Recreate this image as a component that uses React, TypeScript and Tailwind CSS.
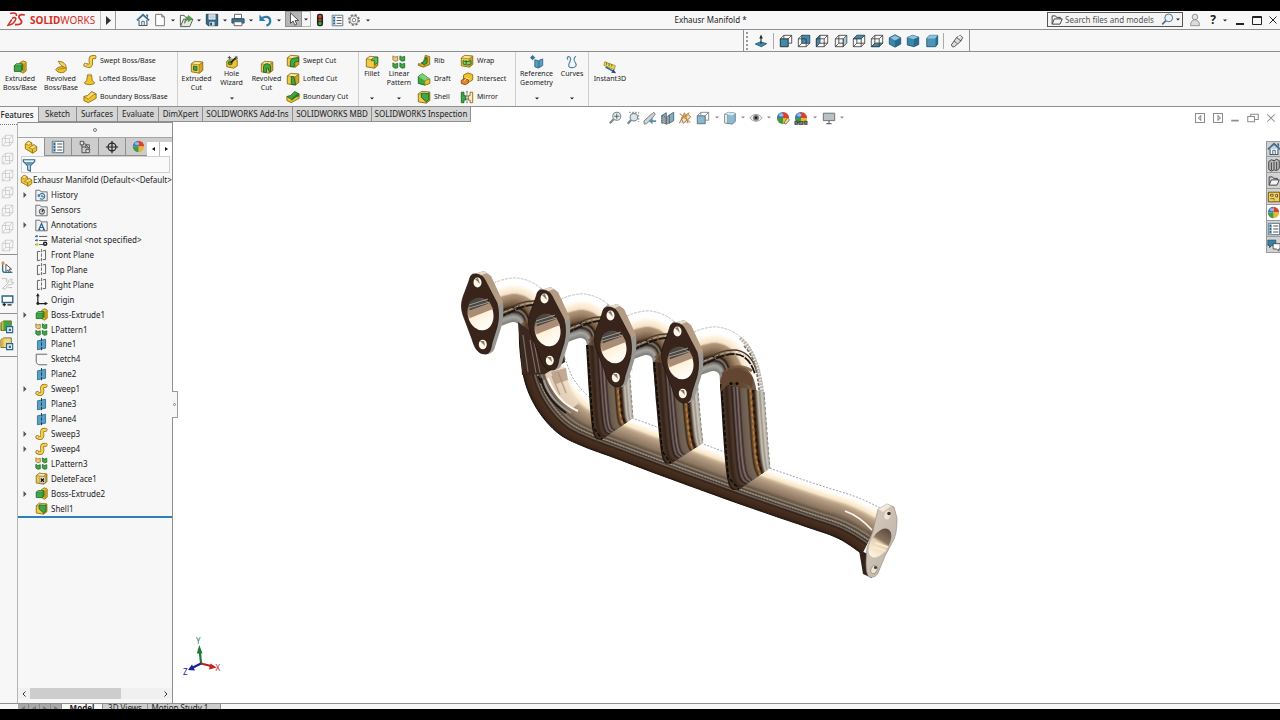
import React from "react";

type P = [number, number];
type Kids = { children?: React.ReactNode };

/* ---------- icon base ---------- */

function Ico({ children, s = 14 }: Kids & { s?: number }) {
  return (
    <svg width={s} height={s} viewBox="0 0 16 16" className="shrink-0" aria-hidden="true">
      {children}
    </svg>
  );
}

function Caret({ color = "#222" }: { color?: string }) {
  return (
    <svg width="4" height="3" viewBox="0 0 4 3" className="shrink-0" aria-hidden="true">
      <path d="M0 .4h4L2 2.6z" fill={color} />
    </svg>
  );
}

/* ---------- title bar icons ---------- */

const HomeIcon = () => (
  <Ico s={14}>
    <path d="M3.5 8v6.3h9V8" fill="#f4f8fb" stroke="#3c5870" strokeWidth="1.2" />
    <path d="M1 8.4 8 2l7 6.4" fill="none" stroke="#3f6d90" strokeWidth="2" />
    <path d="M6.6 9.5h2.8v4.8H6.6z" fill="#fff" stroke="#3c5870" />
    <path d="M11.5 2.5h1.6V5" fill="none" stroke="#3f6d90" strokeWidth="1.4" />
  </Ico>
);
const NewIcon = () => (
  <Ico s={14}>
    <path d="M3 1.5h7l3 3v10H3z" fill="#fdfdfd" stroke="#666" />
    <path d="M10 1.5v3h3" fill="none" stroke="#666" />
  </Ico>
);
const OpenIcon = () => (
  <Ico s={15}>
    <path d="M1.5 13.5v-11h4l1.5 2h3" fill="#fafafa" stroke="#555" />
    <path d="m1.5 14.5 3.4-8h10l-3.4 8z" fill="#e5e8e3" stroke="#555" />
    <path d="M6 11c0-4 1.5-5.8 4-6V2.6L14 6l-4 3.2V7C8.400 7.200 7 8.500 6 11z" fill="#4fa83f" stroke="#2c7423" strokeWidth=".6" />
  </Ico>
);
const SaveIcon = () => (
  <Ico s={14}>
    <path d="M1.500 1.500h13v13h-11l-2-2z" fill="#356785" stroke="#1d4259" />
    <path d="M4 1.500h8v6H4z" fill="#eef3f6" />
    <path d="M5 3.500h6M5 5.500h6" stroke="#8aa0ae" strokeWidth=".8" />
    <path d="M5 10h6v4.500H5z" fill="#cfd8dd" />
    <path d="M6 11h2v3H6z" fill="#1d4259" />
  </Ico>
);
const PrintIcon = () => (
  <Ico s={14}>
    <path d="M4 1.500h8v5H4z" fill="#fff" stroke="#555" />
    <path d="M1 6.500h14v5H1z" fill="#3d7190" stroke="#234e68" />
    <path d="M3.500 10h9v4.500h-9z" fill="#fff" stroke="#555" />
  </Ico>
);
const UndoIcon = () => (
  <Ico s={15}>
    <path d="M4 5.500c5-3 9-1 9 3 0 2.600-1.600 4.200-4 5" fill="none" stroke="#2e7ba5" strokeWidth="2.400" />
    <path d="M1.500 1.500v7h6.500z" fill="#2e7ba5" />
  </Ico>
);
const CursorIcon = () => (
  <Ico s={14}>
    <path d="M4 1v12l3-2.600L9 15l2.200-1-2-4.300h4z" fill="#fff" stroke="#444" />
  </Ico>
);
const TrafficIcon = () => (
  <Ico s={14}>
    <rect x="4.500" y=".8" width="7" height="14.400" rx="2.500" fill="#2a2422" />
    <circle cx="8" cy="4" r="2" fill="#e03a2c" />
    <circle cx="8" cy="8" r="1.800" fill="#7a6a1e" />
    <circle cx="8" cy="12" r="2" fill="#36a13a" />
  </Ico>
);
const ListIcon = ({ s = 14 }: { s?: number }) => (
  <Ico s={s}>
    <path d="M1.500 1.500h13v13h-13z" fill="#fff" stroke="#3f6376" />
    <path d="M2 2h3.500v12H2z" fill="#9cc0d4" />
    <path d="M3 4.500h1.800M3 8h1.800M3 11.500h1.800" stroke="#1d4259" strokeWidth="1.600" />
    <path d="M7 4.500h6M7 8h6M7 11.500h6" stroke="#555" strokeWidth="1.200" />
  </Ico>
);
const GearIcon = () => (
  <Ico s={14}>
    <circle cx="8" cy="8" r="5.800" fill="none" stroke="#777" strokeWidth="2" strokeDasharray="2.500 2.050" />
    <circle cx="8" cy="8" r="4.600" fill="#f4f4f4" stroke="#777" />
    <circle cx="8" cy="8" r="2" fill="#fff" stroke="#777" />
  </Ico>
);
const FolderIcon = () => (
  <Ico s={12}>
    <path d="M1.500 13.500v-11h4.500l1.500 2h5v2" fill="none" stroke="#444" strokeWidth="1.300" />
    <path d="m1.500 13.500 3-7h10.500l-3 7z" fill="#f4f4f4" stroke="#444" strokeWidth="1.300" />
  </Ico>
);
const MagnifierIcon = () => (
  <Ico s={13}>
    <circle cx="9.500" cy="6" r="4.800" fill="#e6f1f8" stroke="#53748c" strokeWidth="1.200" />
    <path d="M6 9.500 1.500 14" stroke="#53748c" strokeWidth="2.200" />
  </Ico>
);
const UserIcon = () => (
  <Ico s={14}>
    <circle cx="8" cy="4.500" r="3.200" fill="#e6e6e6" stroke="#8a8a8a" />
    <path d="M3 14.500c-1-9 11-9 10 0z" fill="#dcdcdc" stroke="#8a8a8a" />
  </Ico>
);

/* ---------- cube view icons ---------- */

type Face = "front" | "back" | "left" | "right" | "top" | "bottom";
const faces: Record<Face, string> = {
  front: "M1.500 5.500h9v9h-9z",
  back: "M5.500 1.500h9v9h-9z",
  left: "M1.500 5.500l4-4v9l-4 4z",
  right: "M10.500 5.500l4-4v9l-4 4z",
  top: "M1.500 5.500l4-4h9l-4 4z",
  bottom: "M1.500 14.500l4-4h9l-4 4z",
};
function CubeIcon({ face, color = "#333", fill = "#3f8bb0", s = 14 }: { face?: Face; color?: string; fill?: string; s?: number }) {
  const solid = face === "front";
  return (
    <Ico s={s}>
      <path
        d={solid ? "M5.500 5.500v-4h9v9h-4M10.500 5.500l4-4M1.500 5.500l4-4" : "M5.500 1.500h9v9h-9zM1.500 5.500l4-4M10.500 5.500l4-4M1.500 14.500l4-4M10.500 14.500l4-4"}
        fill="none"
        stroke={color}
        strokeWidth=".9"
      />
      {face && <path d={faces[face]} fill={fill} stroke={color} strokeWidth=".5" />}
      <path d="M1.500 5.500h9v9h-9z" fill="none" stroke={color} strokeWidth=".9" />
    </Ico>
  );
}
const IsoIcon = () => (
  <Ico>
    <path d="M8 1 14.500 4.500v7L8 15l-6.500-3.500v-7z" fill="#3b86ab" stroke="#1f5674" />
    <path d="M8 1 14.500 4.500 8 8 1.500 4.500z" fill="#8ec1da" stroke="#1f5674" strokeWidth=".7" />
    <path d="M8 8v7l6.500-3.500v-7z" fill="#2b6a8b" />
  </Ico>
);
const DiIcon = () => (
  <Ico>
    <path d="m1.500 4 6-2.500 7 2v8.500L9 14.500l-7.500-2z" fill="#3b86ab" stroke="#1f5674" />
    <path d="m1.500 4 6-2.500 7 2L9 6z" fill="#8ec1da" />
    <path d="M9 6v8.500l5.500-2.500V3.500z" fill="#2b6a8b" />
  </Ico>
);
const TriIcon = () => (
  <Ico>
    <path d="M2 5 5 1.500h9.500v10L12 14.500H2z" fill="#4b95b9" stroke="#1f5674" />
    <path d="M2 5 5 1.500h9.500L12 5z" fill="#8ec1da" />
    <path d="M12 5v9.500l2.500-3v-10z" fill="#2b6a8b" />
  </Ico>
);
const NormalIcon = () => (
  <Ico>
    <path d="m1.500 11.500 6-2.500 7 2-6 3.500z" fill="#3f8bb0" stroke="#1f5674" />
    <path d="M8 11V3" stroke="#222" strokeWidth="1.200" />
    <path d="M8 .5 10 5H6z" fill="#222" />
  </Ico>
);
const TorchIcon = () => (
  <Ico s={14}>
    <path d="m1.500 12.500 6-8.500 4.500-2.500L14.500 4l-2 4-7.500 6.500-2 .3z" fill="#ddd" stroke="#444" />
    <path d="m7.500 4 5 4M5 8l3 3" stroke="#444" />
    <path d="m9 4 3-1.500" stroke="#fff" strokeWidth="1.500" />
  </Ico>
);

/* ---------- feature icons ---------- */

const Y = "#f0c22e";
const YD = "#8a6a10";
const G = "#3fa743";
const GD = "#1c6425";

const ExtrudeIcon = ({ s = 14 }: { s?: number }) => (
  <Ico s={s}>
    <path d="m8 3 3.500-2L15 2.500v10L11.500 15 8 13z" fill={Y} stroke={YD} />
    <path d="m11.500 4.500 3-1.500v9.500l-3 2z" fill="#c4971b" />
    <path d="M1.500 6.500 4 4.500h7v7L9 13H1.500z" fill={G} stroke={GD} />
    <path d="M1.500 6.500 4 4.500h7L9 6.500z" fill="#79cf74" stroke={GD} strokeWidth=".6" />
    <path d="M9 6.500V13l2-1.500v-7z" fill="#2c8133" />
  </Ico>
);
const RevolveIcon = () => (
  <Ico>
    <path d="M5 1.500c6 0 9.500 4 9 8.500L11 8C8 6.500 6.500 4.500 5 1.500z" fill="#f6d65a" stroke={YD} />
    <path d="M2 11c1.500-3 6-4 9-3l3 2c.5 5-9 6.500-12 1z" fill={Y} stroke={YD} />
    <path d="M4.500 11c2-1 4.500-1.500 7-1" fill="none" stroke={YD} strokeWidth=".8" />
  </Ico>
);
const SweepIcon = ({ s = 13 }: { s?: number }) => (
  <Ico s={s}>
    <path d="M3 12.500c5 2.500 6.500 0 6-3.500-.5-4-.5-6 4-5.500" fill="none" stroke={YD} strokeWidth="4.800" strokeLinecap="round" />
    <path d="M3 12.500c5 2.500 6.500 0 6-3.500-.5-4-.5-6 4-5.500" fill="none" stroke="#f6d04a" strokeWidth="3.100" strokeLinecap="round" />
    <circle cx="3" cy="12.300" r="1.600" fill="#fbe9a0" stroke={YD} strokeWidth=".5" />
  </Ico>
);
const LoftIcon = () => (
  <Ico s={13}>
    <path d="M5.500 2.500h5l1 7 3 2.500c-1 3-12 3-13 0l3-2.500z" fill={Y} stroke={YD} />
    <path d="M5.500 2.500c1-1.500 4-1.500 5 0-1 1-4 1-5 0z" fill="#fbe48a" stroke={YD} strokeWidth=".6" />
  </Ico>
);
const BoundaryIcon = ({ green = false }: { green?: boolean }) => (
  <Ico s={14}>
    <path d="m1 7.500 4-1 5-4.500 5 2.500v5L6 14.500l-5-2.500z" fill={Y} stroke={YD} />
    <path d="m1 7.500 4-1 5-4.500 5 2.500-4 1.500-5 4.500z" fill={green ? G : "#f9dd78"} stroke={green ? GD : YD} strokeWidth=".8" />
    {green && <path d="m6 10.500 5-4.500 4-1.500v2.500l-4 1.500-5 4z" fill="#1f7a2a" />}
  </Ico>
);
const BlockIcon = ({ kind, s = 14 }: { kind: "cut" | "fillet" | "shell" | "revcut" | "sweepcut" | "loftcut" | "wrap" | "delete"; s?: number }) => (
  <Ico s={s}>
    <path d="m1.500 4.500 4-3 9 1v9.500l-4 3-9-1.500z" fill="#f3cb48" stroke={YD} />
    <path d="m1.500 4.500 4-3 9 1-4 3z" fill="#fae79a" stroke={YD} strokeWidth=".7" />
    <path d="M10.500 5.500v9.500l4-3V2.500z" fill="#d0a324" stroke={YD} strokeWidth=".6" />
    {kind === "cut" && <path d="m4 7 4 .5v4.500l-4-.5z" fill={G} stroke={GD} />}
    {kind === "fillet" && <path d="M7 6.500C8 3.500 10 3 14.500 2.500V9l-3.500 2V6.500z" fill="#5cc158" stroke={GD} strokeWidth=".8" />}
    {kind === "shell" && <path d="m5 3.500 8.500.5v7l-3 2.500-5.500-5z" fill={G} stroke={GD} />}
    {kind === "revcut" && <path d="M4 14V8c0-5 8-5 8 0v5.500L9.500 12V9.500h-2V14z" fill={G} stroke={GD} />}
    {kind === "sweepcut" && <path d="M5 14.500V9c0-3 2.500-5 9.500-4.500v4C11 8.500 9.500 9 9.500 11v3.800z" fill={G} stroke={GD} />}
    {kind === "loftcut" && <path d="M6 5.500h3l2 9-5-.5z" fill={G} stroke={GD} />}
    {kind === "wrap" && <path d="M3.500 7.500c3 1.500 6 1.500 9 0v4c-3 1.500-6 1.500-9 0zM7 7v5" fill="#7ccf5d" stroke={GD} />}
    {kind === "delete" && (
      <>
        <path d="M5.500 6h7v7.500h-7z" fill="#f4f0e2" stroke="#777" strokeWidth=".6" />
        <path d="m7 8 4 4M11 8l-4 4" stroke="#111" strokeWidth="1.700" />
      </>
    )}
  </Ico>
);
const HoleIcon = () => (
  <Ico>
    <path d="m2 7 4-2.500 8 1v7L10 15l-8-1.500z" fill={Y} stroke={YD} />
    <circle cx="6" cy="9" r="2.200" fill={G} stroke={GD} />
    <path d="m6.500 9 6-6" stroke="#222" strokeWidth="2" />
    <path d="M5 1v4M3 3h4M13.500 1v3M11.500 1.500l3 3" stroke="#444" />
  </Ico>
);
const PatternIcon = ({ s = 14 }: { s?: number }) => (
  <Ico s={s}>
    {[1, 9].map((x) =>
      [1, 9].map((y) => (
        <path
          key={`${x}-${y}`}
          d={`M${x} ${y}l2.500 1.500L${x + 5.5} ${y + 0.5}v5l-3 .6L${x} ${y + 4.5}z`}
          fill={x === 1 && y === 1 ? "#f2c985" : G}
          stroke={x === 1 && y === 1 ? "#9a6b1c" : GD}
          strokeWidth=".9"
        />
      )),
    )}
  </Ico>
);
const RibIcon = () => (
  <Ico>
    <path d="M1.500 11c3 1 6 0 8-9.500l5 1.500v9l-7 3-6-2z" fill="#d7a52a" stroke={YD} />
    <path d="M5 10c3 0 4.500-3 5-6l1.500.500V10l-3 2.500z" fill={G} stroke={GD} />
  </Ico>
);
const DraftIcon = () => (
  <Ico>
    <path d="M1.500 5 6 2l8.500 6v5L9 15l-7.500-2z" fill={G} stroke={GD} />
    <path d="M1.500 5 6 2l8.500 6L9 10z" fill="#7cd077" />
    <path d="M9 10v5l5.500-2V8z" fill={Y} stroke={YD} strokeWidth=".6" />
  </Ico>
);
const IntersectIcon = () => (
  <Ico>
    <path d="m4 3.500 5-2.500 5.500 2v6L9.500 12 4 10z" fill={Y} stroke={YD} />
    <path d="m1.500 9.500 4-2 4 1.500v3.500L6 14.500 1.500 13z" fill="#e8862e" stroke="#8a4510" />
    <path d="m5 10 2.500-3 3 1" fill="none" stroke="#fff2c0" />
  </Ico>
);
const MirrorIcon = () => (
  <Ico>
    <path d="M1.500 2.500h3v4h2v5h-2v3h-3z" fill={G} stroke={GD} />
    <path d="M14.500 2.500h-3v4h-2v5h2v3h3z" fill="#f6ecc8" stroke={YD} />
    <path d="M8 1v14" stroke="#444" strokeDasharray="3 1" />
  </Ico>
);
const RefGeoIcon = () => (
  <Ico>
    <path d="m5.500 5.500 4 1V15l-4-1.500zM10.500 6l4-1.500V12l-4 2.500z" fill="#5b9fc4" stroke="#2d6789" />
    <circle cx="3" cy="3" r="1.800" fill="#4b8fb5" stroke="#2d6789" />
    <path d="M3 0v6M0 3h6" stroke="#2d6789" strokeWidth=".7" />
  </Ico>
);
const CurvesIcon = () => (
  <Ico>
    <path d="M3.500 5.500C1 3 3.500 1 5.500 2.500 7.500 4.500 6 7 5 9c-2 4 0 5.500 3 5.500 4 0 6-2.500 4-5.500-2.500-3-2-6 .5-7.500" fill="none" stroke="#4a84a5" strokeWidth="1.300" />
  </Ico>
);
const InstantIcon = () => (
  <Ico>
    <path d="m2 2 12 4.500-1 4.500L1 6z" fill="#f5d84a" stroke="#8a7a20" strokeWidth=".8" />
    <path d="M4 3v2.500M7 4v3M10 5v2.500" stroke="#554" />
    <path d="m3 8 9 5" stroke="#2a6692" strokeWidth="1.800" />
    <path d="m15 15-5.500-.5 2.500-4z" fill="#1d4f78" />
  </Ico>
);
const PlaneIcon = () => (
  <Ico s={13}>
    <path d="m3 3.500 10-2v11l-10 2z" fill="#5ba0c6" stroke="#2d6789" />
    <path d="M8 0v16" stroke="#173f58" strokeWidth="1.200" strokeDasharray="4 1.500" />
  </Ico>
);
const RefPlaneIcon = () => (
  <Ico s={13}>
    <path d="M6.500 3H3v11.500l3.500-1M9.500 2.500 13 1.500v11.500H9.500" fill="none" stroke="#555" strokeWidth="1.100" />
    <path d="M8 0v16" stroke="#555" strokeDasharray="4 1.500" />
  </Ico>
);
const OriginIcon = () => (
  <Ico s={13}>
    <path d="M3.500 3v10h10" fill="none" stroke="#222" strokeWidth="1.500" />
    <path d="m3.500 0 2.200 4H1.300zM16 13l-4 2.200v-4.400z" fill="#222" />
    <circle cx="3.500" cy="13" r="1.800" fill="#222" />
  </Ico>
);
const SketchIcon = () => (
  <Ico s={13}>
    <path d="M15 1.500H1.500V10c0 3 2 4.500 4.500 4.500h9" fill="none" stroke="#666" strokeWidth="1.200" />
  </Ico>
);
const MaterialIcon = () => (
  <Ico s={13}>
    <path d="M0 3h3M5 3h10M0 8h3M5 8h10M0 13h3M5 13h6" stroke="#555" strokeWidth="1.200" />
    <path d="M1 1.500h2.500v2.500H1zM1 6.500h2.500V9H1z" fill="#3a7da2" />
    <circle cx="2.500" cy="13" r="1.800" fill="#c6cf3a" />
    <circle cx="12.500" cy="12" r="2.800" fill="#222" />
    <circle cx="12.500" cy="12" r="1" fill="#fff" />
  </Ico>
);
const FolderTag = ({ kind }: { kind: "history" | "sensor" | "note" }) => (
  <Ico s={13}>
    <path d="M1 14.500v-13h5l1.500 2H15v11z" fill="#eef0f2" stroke="#666" strokeWidth="1.100" />
    {kind === "history" && <path d="M5 9a3.500 3.500 0 1 1 1 2.500M8.500 7v2.500H11M4 6.500V9h2.500" fill="none" stroke="#2f6f94" strokeWidth="1.300" />}
    {kind === "sensor" && (
      <>
        <circle cx="8.500" cy="9.300" r="3.300" fill="#ccc" stroke="#333" />
        <path d="m8.500 9.500 2-2.500" stroke="#111" strokeWidth="1.300" />
      </>
    )}
    {kind === "note" && <path d="M4.800 13 8 5.500l3.200 7.500M6 10.500h4M4 13h2.500M9.700 13h2.500" fill="none" stroke="#1f5f8a" strokeWidth="1.400" />}
  </Ico>
);
const PartIcon = ({ s = 14 }: { s?: number }) => (
  <Ico s={s}>
    <path d="m1.500 4.500 3.500-3 4 2v3l2.500-1 3 2v4.500L10 15l-8.500-5z" fill="#f2c531" stroke={YD} />
    <path d="m1.500 4.500 3.500-3 4 2-3.500 2.500zM5.500 9l6-3.500 3 2-5 3z" fill="#fae384" stroke={YD} strokeWidth=".7" />
    <path d="M9.500 10.500V15" stroke={YD} />
  </Ico>
);
const TreeCfgIcon = () => (
  <Ico s={14}>
    <path d="M2.500 1.500h4v4h-4zM9 5.500h4v3.500H9zM9 11h4v3.500H9z" fill="#e8e8e8" stroke="#444" />
    <path d="M4.500 5.500v9H9M4.500 8H9" fill="none" stroke="#444" />
    <path d="m7 3 7 8" stroke="#444" />
  </Ico>
);
const TargetIcon = () => (
  <Ico s={14}>
    <circle cx="8" cy="8" r="4.500" fill="none" stroke="#222" strokeWidth="1.400" />
    <path d="M8 1v14M1 8h14" stroke="#222" strokeWidth="1.400" />
  </Ico>
);
const BallIcon = ({ s = 14, tool }: { s?: number; tool?: "pencil" | "scene" }) => (
  <Ico s={s}>
    <path d="M8 8V1a7 7 0 0 0-7 7z" fill="#3b79c0" />
    <path d="M8 8V1a7 7 0 0 1 7 7z" fill="#d9402f" />
    <path d="M8 8h7a7 7 0 0 1-7 7z" fill="#e4b92e" />
    <path d="M8 8H1a7 7 0 0 0 7 7z" fill="#3f9a45" />
    <ellipse cx="6" cy="4.500" rx="2.500" ry="1.800" fill="#fff" opacity=".5" />
    {tool === "pencil" && <path d="m9 14 4-6 2.500 2-4 5z" fill="#e8d9b0" stroke="#7a5a2a" strokeWidth=".8" />}
    {tool === "scene" && <path d="M1 11.500h3v4H1zM5.500 12h5v3.500h-5zM12 11.500h3v4h-3z" fill="#777" stroke="#333" strokeWidth=".8" />}
  </Ico>
);
const FunnelIcon = () => (
  <Ico s={14}>
    <path d="M1.500 2h13v2L9.500 9v6l-3-1.500V9l-5-5z" fill="#eaf3f8" stroke="#2f6482" strokeWidth="1.300" />
    <path d="M3 4.500h10L9 8.500H7z" fill="#5d9cbd" />
  </Ico>
);

/* ---------- heads-up icons ---------- */

const ZoomFitIcon = () => (
  <Ico>
    <circle cx="10" cy="6" r="4.600" fill="#e9eef1" stroke="#7a8790" strokeWidth="1.200" />
    <path d="M6.500 9.500 2 14" stroke="#7a8790" strokeWidth="2.400" />
    <path d="M10 3v6M7 6h6" stroke="#444" strokeWidth=".9" />
  </Ico>
);
const ZoomAreaIcon = () => (
  <Ico>
    <path d="M3.500 1.500h11v11" fill="none" stroke="#777" strokeDasharray="2 1.500" />
    <circle cx="9" cy="7" r="4.300" fill="#dbe5eb" stroke="#7a8790" strokeWidth="1.200" />
    <path d="M6 10 2 14.500" stroke="#7a8790" strokeWidth="2.400" />
  </Ico>
);
const PrevViewIcon = () => (
  <Ico>
    <path d="m1 11.500 7-6.500 4.500-3.500 1.500 2-4 5.500-6 5.500-2.500.5z" fill="#cfd3d6" stroke="#70777c" />
    <path d="M15 10.500h-4V8l-4.500 3.500L11 15v-2.500h4z" fill="#5b8ea9" />
  </Ico>
);
const SectionIcon = () => (
  <Ico>
    <path d="m1 5 5-3v9.500L1 14zM9.500 4.500l5-3V11l-5 3z" fill="#7db1ca" stroke="#48606d" />
    <path d="m1 5 5 2.500V15l-5-1.500zM9.500 4.500 6 7v8l3.500-1z" fill="#9aa3a8" stroke="#555" strokeDasharray="1.500 1" />
  </Ico>
);
const AnnoViewIcon = () => (
  <Ico>
    <path d="m1.500 14 6-12 4 12M4 9l8-5 2.500 3L6 14z" fill="#f1dfc4" stroke="#8b7355" />
    <path d="m2 3 12 10M13 2 4 8" stroke="#e08a2c" strokeWidth="1.300" />
  </Ico>
);
const StyleIcon = () => (
  <Ico>
    <path d="m2 3.500 4-2 8 1v9.500l-3.500 3L2 13.500z" fill="#8dbbd0" stroke="#65767f" />
    <path d="m2 3.500 4-2 8 1-3.500 2.500z" fill="#dbe9f0" />
    <path d="m2 3.500 3 .5v10l-3-.5z" fill="#f7f7f7" stroke="#65767f" strokeWidth=".6" />
  </Ico>
);
const EyeIcon = () => (
  <Ico>
    <path d="M1 8c3.500-5.500 10.500-5.500 14 0-3.500 5-10.500 5-14 0z" fill="#eee" stroke="#999" />
    <circle cx="8" cy="7.800" r="3.300" fill="#6d7478" />
    <circle cx="8" cy="7.800" r="1.400" fill="#1c1c1c" />
  </Ico>
);
const MonitorIcon = () => (
  <Ico>
    <path d="M1.500 2.500h13v8.500h-13z" fill="#b9c1c6" stroke="#666" />
    <path d="M8 11v3M5 14.500h6" stroke="#666" strokeWidth="1.300" />
  </Ico>
);
const WinIcon = ({ d }: { d: string }) => (
  <Ico s={12}>
    <path d={d} fill="none" stroke="#8d8d8d" strokeWidth="1.400" />
  </Ico>
);

/* ---------- pipe shading ---------- */

type Stop = [number, string];

function lerp(a: P, b: P, t: number): P {
  return [a[0] + (b[0] - a[0]) * t, a[1] + (b[1] - a[1]) * t];
}
function smooth(pts: P[]): P[] {
  const out: P[] = [];
  for (let i = 0; i < pts.length - 1; i++) {
    const a = pts[Math.max(0, i - 1)];
    const b = pts[i];
    const c = pts[i + 1];
    const d = pts[Math.min(pts.length - 1, i + 2)];
    for (let k = 0; k < 6; k++) {
      const t = k / 6;
      const f = (j: 0 | 1) =>
        0.5 * (2 * b[j] + (c[j] - a[j]) * t + (2 * a[j] - 5 * b[j] + 4 * c[j] - d[j]) * t * t + (3 * b[j] - a[j] - 3 * c[j] + d[j]) * t * t * t);
      out.push([f(0), f(1)]);
    }
  }
  out.push(pts[pts.length - 1]);
  return out;
}
function line(pts: P[]) {
  return pts.map((p, i) => `${i ? "L" : "M"}${p[0].toFixed(1)} ${p[1].toFixed(1)}`).join("");
}
function mix(a: string, b: string, t: number) {
  const n = (s: string, i: number) => parseInt(s.slice(i, i + 2), 16);
  return `rgb(${[1, 3, 5].map((i) => Math.round(n(a, i) + (n(b, i) - n(a, i)) * t)).join(",")})`;
}
function colorAt(stops: Stop[], t: number) {
  for (let i = 0; i < stops.length - 1; i++) {
    const [t0, c0] = stops[i];
    const [t1, c1] = stops[i + 1];
    if (t <= t1) return mix(c0, c1, (t - t0) / (t1 - t0));
  }
  return stops[stops.length - 1][1];
}

/* A swept surface between two guide curves, shaded across its width. */
function Swept({ a, b, stops, steps = 44 }: { a: P[]; b: P[]; stops: Stop[]; steps?: number }) {
  const A = smooth(a);
  const B = smooth(b);
  return (
    <g>
      {Array.from({ length: steps }, (_, i) => {
        const t0 = i / steps;
        const t1 = Math.min(1, (i + 3) / steps);
        const p = A.map((q, j) => lerp(q, B[j], t0));
        const r = A.map((q, j) => lerp(q, B[j], t1)).reverse();
        return <path key={i} d={`${line(p)}L${line(r).slice(1)}z`} fill={colorAt(stops, (i + 0.5) / steps)} />;
      })}
    </g>
  );
}

const logOuter: P[] = [[519, 322], [520, 350], [524, 378], [532, 400], [545, 420], [562, 436], [585, 447], [615, 458], [660, 475], [740, 504], [807, 527], [833, 536], [848, 544], [862, 554]];
const logInner: P[] = [[562, 330], [563, 350], [567, 364], [573, 378], [582, 390], [592, 399], [605, 407], [630, 417], [676, 434], [755, 463], [822, 486], [848, 494], [866, 501], [884, 510]];
const logStops: Stop[] = [
  [0, "#2b1b11"], [0.06, "#3f291c"], [0.18, "#4a3122"], [0.22, "#2c1d14"], [0.25, "#85796c"], [0.28, "#382b23"], [0.32, "#96897a"],
  [0.35, "#40342b"], [0.39, "#938473"], [0.43, "#655443"], [0.5, "#8d7762"], [0.6, "#a18a72"], [0.7, "#b7a087"], [0.75, "#d0b999"],
  [0.79, "#f6e4c6"], [0.88, "#fff6e6"], [0.94, "#ffffff"], [1, "#ffffff"],
];

const arcInner: P[] = [[695, 378], [706, 373], [714, 371], [719, 374], [720, 382], [721, 392], [722, 404], [723, 420]];
const arcOuter: P[] = [[690, 334], [702, 329], [718, 327], [735, 333], [748, 345], [757, 362], [762, 382], [765, 404]];
const arcStops: Stop[] = [
  [0, "#7d7c79"], [0.12, "#a9a7a3"], [0.19, "#6f6862"], [0.23, "#241b15"], [0.28, "#8f806f"], [0.33, "#241b15"], [0.38, "#6b5138"],
  [0.42, "#7a6048"], [0.54, "#a1866b"], [0.62, "#b0967a"], [0.66, "#f4e2c7"], [0.78, "#fff3df"], [0.86, "#ffffff"], [1, "#ffffff"],
];
const legStops: Stop[] = [
  [0, "#15100c"], [0.06, "#4c3627"], [0.14, "#33231a"], [0.22, "#533c30"], [0.27, "#2e201a"], [0.31, "#756464"], [0.35, "#3a2a25"],
  [0.39, "#857474"], [0.43, "#3d2d26"], [0.47, "#6a5b50"], [0.6, "#786857"], [0.63, "#3a2a1e"], [0.66, "#6c4c2c"], [0.7, "#a0703f"],
  [0.75, "#2c1e14"], [0.79, "#503a28"], [0.82, "#8a8074"], [0.86, "#d2ccc0"], [0.9, "#8f897f"], [0.94, "#d9d3c8"], [0.98, "#aaa59c"], [1, "#cfcac0"],
];

function Leg({ left, right }: { left: P[]; right: P[] }) {
  const at = (t: number) => line(left.map((p, i) => lerp(p, right[i], t)));
  return (
    <g fill="none">
      <Swept a={left} b={right} stops={legStops} steps={50} />
      <path d={at(0.74)} stroke="#23170e" strokeWidth="2" strokeDasharray="3 4" />
      <path d={at(0.69)} stroke="#b97d42" strokeWidth="1.500" strokeDasharray="3 3" />
      <path d={at(1)} stroke="#8c8780" strokeWidth="1" strokeDasharray="3 2" />
      <path d={at(0.03)} stroke="#0e0a08" strokeWidth="1.500" strokeDasharray="4 2" />
    </g>
  );
}

function Arc({ dx, dy }: { dx: number; dy: number }) {
  return (
    <g transform={`translate(${dx} ${dy})`}>
      <Swept a={arcInner} b={arcOuter} stops={arcStops} />
      <path d="M720 381C722 372 732 366 745 368C753 372 756 384 757 396L754 402L722 402z" fill="#5b402d" opacity=".85" />
      <path d="M722 374C730 366 742 364 752 371" fill="none" stroke="#6f5138" strokeWidth="3" opacity=".8" />
      <path d="M698 367C712 361 722 354 734 354C744 354 751 361 755 374" fill="none" stroke="#1d1510" strokeWidth="1.800" strokeDasharray="9 1" />
      <path d="M700 362C712 356 720 350 733 350C745 350 753 358 757 372" fill="none" stroke="#4a382a" strokeWidth="1.300" />
      <path d="M698 364C712 358 721 352 734 352C744 352 752 360 756 372" fill="none" stroke="#c9b79d" strokeWidth=".8" strokeDasharray="4 2" />
      <path d="M740 338C752 348 760 366 763 402" fill="none" stroke="#b9b1a6" strokeWidth="3.500" strokeDasharray="2 1" />
      <path d="M744 346C753 355 758 368 760 402" fill="none" stroke="#6e6155" strokeWidth="1.500" strokeDasharray="3 1.500" />
      <path d={line(smooth(arcOuter))} fill="none" stroke="#b5b2ad" strokeWidth=".8" strokeDasharray="3 1" />
    </g>
  );
}

function Flange({ dx, dy }: { dx: number; dy: number }) {
  return (
    <g transform={`translate(${dx} ${dy})`}>
      <path d="M474 274L484 271L491 277L503 303C504 312 503 322 501 328L494 350C492 353 488 355 485 354z" fill="#9a9691" />
      <path d="M476 274L484 271L491 276L503 302L497 307L484 280z" fill="#b39b84" />
      <path d="M474 274L484 271L487 273L479 276z" fill="#e6dccd" />
      <path d="M474 274C471 274 470 277 469 281L463 297C461 303 461 309 463 315L472 339C474 346 477 354 485 354C490 354 491 349 492 343L497 327C499 319 499 311 497 303L485 280C483 276 479 273.500 474 274z" fill="#38241b" stroke="#1c110b" strokeWidth=".7" />
      <ellipse cx="480.500" cy="314" rx="12.800" ry="16.500" transform="rotate(-14 480.500 314)" fill="url(#bore)" />
      <path d="M469 303C474 296 483 297 489 304L470 311z" fill="#4a4642" />
      <path d="M469 305L488 299M469 308L490 302" stroke="#b5b0aa" strokeWidth=".8" />
      <path d="M468 311L490 303L493 309L470 318z" fill="#a98e75" />
      <ellipse cx="477.500" cy="282.500" rx="4" ry="5" fill="#fdf6ea" />
      <path d="M475 279L480 284L478 278z" fill="#8a7563" />
      <ellipse cx="482.800" cy="344.500" rx="4" ry="4.800" fill="#fdf6ea" />
      <path d="M480 341L485 346L484 341z" fill="#8a7563" />
    </g>
  );
}

function Model() {
  return (
    <svg viewBox="173 122 1093 581" className="block h-full w-full" role="img" aria-label="Exhaust manifold model">
      <defs>
        <linearGradient id="bore" x1="0" y1="0" x2="0.200" y2="1">
          <stop offset="0" stopColor="#3c342d" />
          <stop offset=".35" stopColor="#a58b72" />
          <stop offset=".5" stopColor="#c9ad8c" />
          <stop offset=".56" stopColor="#fff0d8" />
          <stop offset="1" stopColor="#fffdf8" />
        </linearGradient>
        <linearGradient id="endBore" x1="0" y1="0" x2="0" y2="1">
          <stop offset="0" stopColor="#5a4a3e" />
          <stop offset=".4" stopColor="#8a7562" />
          <stop offset=".5" stopColor="#e9d3b2" />
          <stop offset="1" stopColor="#fff4e0" />
        </linearGradient>
        <linearGradient id="endFace" x1="0" y1="0" x2="1" y2="1">
          <stop offset="0" stopColor="#dccfc0" />
          <stop offset="1" stopColor="#b7aea5" />
        </linearGradient>
      </defs>

      <Swept a={logOuter} b={logInner} stops={logStops} steps={60} />
      <path d={line(smooth(logInner))} fill="none" stroke="#8f98a8" strokeWidth=".9" strokeDasharray="2 1.500" />
      <path d={line(smooth(logOuter.map((p, i) => lerp(p, logInner[i], 0.31))))} fill="none" stroke="#b8ac9c" strokeWidth=".8" strokeDasharray="1.500 1.500" />
      <path d={line(smooth(logOuter))} fill="none" stroke="#1b110b" strokeWidth="1" />
      <path d="M519 320L562 326L565 362L546 374L522 375z" fill="#3b281e" />
      <path d="M545 374C556 366 563 366 566 368C566 378 570 392 580 402L572 409C560 400 548 388 545 374z" fill="#ecdcc8" opacity=".85" />
      <path d="M551 372L566 368L568 380L556 384z" fill="#a38770" opacity=".6" />
      <path d="M548 378C553 392 562 404 578 411" fill="none" stroke="#fffaf2" strokeWidth="2" />
      <path d="M541 378C543 390 551 402 566 413M538 376L541 383" fill="none" stroke="#1f1712" strokeWidth="2" />
      <path d="M544 380C548 394 556 404 571 413" fill="none" stroke="#9c9a9c" strokeWidth="1.800" />
      <path d="M552 376L560 395M558 372L566 393" stroke="#b08a6c" strokeWidth="1.500" opacity=".7" />
      <path d="M845 511C856 515 864 521 872 530" fill="none" stroke="#fff8ea" strokeWidth="1.500" />
      <path d="M832 512C850 518 862 526 870 536" fill="none" stroke="#7d6c5a" strokeWidth="1" />

      <Arc dx={-200} dy={-49} />
      <path d="M518 322L556 350L548 372L523 372z" fill="#3b281e" />
      <path d="M523 335L528 372M530 340L536 373M534 342L540 373" stroke="#7f6b68" strokeWidth="1.200" />
      <Flange dx={0} dy={0} />

      <Arc dx={-133} dy={-33} />
      <Leg left={[[586, 345], [592, 428], [601, 440]]} right={[[628, 350], [632, 405], [633, 418]]} />
      <Flange dx={67} dy={16} />

      <Arc dx={-67} dy={-16} />
      <Leg left={[[653, 362], [661, 452], [670, 464]]} right={[[696, 368], [701, 425], [703, 443]]} />
      <Flange dx={133} dy={33} />

      <Arc dx={0} dy={0} />
      <Leg left={[[720, 384], [727, 478], [738, 490]]} right={[[764, 392], [768, 445], [770, 468]]} />
      <path d="M721 392L722 374C732 366 746 368 753 378L752 388C742 378 730 380 721 392z" fill="#624632" />
      <circle cx="731" cy="383.500" r="1.500" fill="#100a07" />
      <circle cx="737" cy="383.500" r="1.500" fill="#100a07" />
      <Flange dx={200} dy={49} />

      <path d="M859 550L868 554L872 578L863 574z" fill="#33221a" />
      <path d="M878 509L887 504L894 507L897 518C897 528 896 536 893 541L885 556L878 573C876 577 872 578 869 577C865 572 866 560 867 548L873 531z" fill="url(#endFace)" stroke="#9a8f84" strokeWidth=".7" />
      <path d="M878 509L887 504L891 506L883 512z" fill="#f2e8da" />
      <ellipse cx="880" cy="543" rx="9" ry="16" transform="rotate(32 880 543)" fill="url(#endBore)" />
      <path d="M873 547L886 551M875 543L888 547" stroke="#f9ecd6" strokeWidth="1.500" />
      <ellipse cx="887.500" cy="515" rx="3" ry="4.500" transform="rotate(20 887.500 515)" fill="#efe4d4" />
      <circle cx="889" cy="513.500" r="1.800" fill="#3d2d24" />
      <ellipse cx="874" cy="569.500" rx="3" ry="4.300" transform="rotate(20 874 569.500)" fill="#efe4d4" stroke="#8b7d70" strokeWidth=".6" />
      <circle cx="875.500" cy="567.500" r="1.600" fill="#4d3a2e" />

      <g fontFamily="'Noto Sans', sans-serif" fontSize="8">
        <path d="M201 663L199.700 650" stroke="#1d7a32" strokeWidth="2.200" />
        <path d="M199.300 645L202.500 653.500H196.800z" fill="#1d7a32" />
        <path d="M201 663.500L211 666" stroke="#b3201f" strokeWidth="2.200" />
        <path d="M216.500 667.500L209 669.500L210.500 663.500z" fill="#c8201f" />
        <path d="M201 663.500L193 667.500" stroke="#17209a" strokeWidth="2.200" />
        <path d="M188 670L192 664.500L195 670.500z" fill="#17209a" />
        <text x="196" y="644" fill="#2f7f46">Y</text>
        <text x="215.500" y="671" fill="#c8201f">X</text>
        <text x="183" y="675" fill="#17209a">Z</text>
      </g>
    </svg>
  );
}

/* ---------- chrome pieces ---------- */

function IconButton({ label, className = "w-3.5", children }: Kids & { label: string; className?: string }) {
  return (
    <button type="button" aria-label={label} className={`flex shrink-0 items-center justify-center ${className}`}>
      {children}
    </button>
  );
}
function DropButton({ label, color, className = "w-3" }: { label: string; color?: string; className?: string }) {
  return (
    <IconButton label={label} className={className}>
      <Caret color={color} />
    </IconButton>
  );
}

function TitleBar() {
  return (
    <header className="flex h-[19px] shrink-0 items-stretch border-b border-[#8f8f8f]">
      <div className="flex w-[101px] items-center gap-1 border-r border-[#bdbdbd] pl-[7px]">
        <svg width="19" height="16" viewBox="0 0 19 16" aria-hidden="true">
          <path d="M3 1.500c4-1 7-.5 6.500 2.500" fill="none" stroke="#d22f27" strokeWidth="1.500" />
          <path d="M5 6.500c3-1.800 4.500-.8 3.500 1.500C7.300 10.800 4.500 12.800 1 13.300L4.800 7.500" fill="none" stroke="#d22f27" strokeWidth="1.500" />
          <path d="M17.800 3c-3.600-1.200-6.300.2-5.800 2.500.4 1.900 3.400 2.700 2.500 5-.7 1.800-3.500 2.500-6.500 2" fill="none" stroke="#d22f27" strokeWidth="1.800" />
        </svg>
        <span className="text-[10px] leading-none text-[#d22f27]">
          <b>SOLID</b>WORKS
        </span>
      </div>
      <IconButton label="Expand menu" className="w-[15px] border-r border-[#9a9a9a]">
        <svg width="5" height="9" viewBox="0 0 5 9" aria-hidden="true"><path d="M0 0l5 4.500L0 9z" fill="#333" /></svg>
      </IconButton>
      <nav className="ml-[20px] flex" aria-label="Standard">
        <IconButton label="Home"><HomeIcon /></IconButton>
        <span className="w-[3px]" />
        <IconButton label="New"><NewIcon /></IconButton>
        <DropButton label="New options" />
        <IconButton label="Open"><OpenIcon /></IconButton>
        <DropButton label="Open options" />
        <IconButton label="Save"><SaveIcon /></IconButton>
        <DropButton label="Save options" />
        <IconButton label="Print"><PrintIcon /></IconButton>
        <DropButton label="Print options" />
        <IconButton label="Undo" className="w-4"><UndoIcon /></IconButton>
        <DropButton label="Undo options" />
        <IconButton label="Select" className="h-4 w-[17px] border border-[#8f8f8f] bg-[#b5b5b5]"><CursorIcon /></IconButton>
        <IconButton label="Select options" className="h-4 w-[9px] border border-l-0 border-[#b9b9b9]"><Caret /></IconButton>
        <IconButton label="Rebuild" className="w-[17px]"><TrafficIcon /></IconButton>
        <IconButton label="File properties" className="w-[18px]"><ListIcon s={13} /></IconButton>
        <IconButton label="Options" className="w-4"><GearIcon /></IconButton>
        <DropButton label="More options" />
      </nav>
      <h1 className="flex-1 self-center text-center text-[8px] leading-none text-[#222]">Exhausr Manifold *</h1>
      <div className="mt-px flex h-[15px] w-[136px] items-center border border-[#555] bg-[#f4f4f4] pl-[3px]">
        <FolderIcon />
        <input aria-label="Search" placeholder="Search files and models" className="ml-[2px] h-full w-[94px] min-w-0 bg-transparent text-[8px] outline-none placeholder:text-[#555]" />
        <button type="button" aria-label="Run search" className="ml-[2px]"><MagnifierIcon /></button>
        <DropButton label="Search scope" className="w-2" />
      </div>
      <div className="flex">
        <IconButton label="Account" className="w-6"><UserIcon /></IconButton>
        <IconButton label="Help" className="w-3"><span className="text-[12px] leading-none font-bold text-[#222]">?</span></IconButton>
        <DropButton label="Help options" />
        <IconButton label="Minimize" className="w-[17px]">
          <svg width="8" height="10" viewBox="0 0 8 10"><path d="M0 9h8" stroke="#222" strokeWidth="2" /></svg>
        </IconButton>
        <IconButton label="Maximize" className="w-[18px]">
          <svg width="10" height="9" viewBox="0 0 10 9"><path d="M.5.5h9v8h-9zM0 1.500h10" fill="none" stroke="#222" /></svg>
        </IconButton>
        <IconButton label="Close" className="w-[14px]">
          <svg width="8" height="8" viewBox="0 0 8 8"><path d="m.5.5 7 7M7.500.5l-7 7" stroke="#222" /></svg>
        </IconButton>
      </div>
    </header>
  );
}

function ViewBar() {
  return (
    <div className="flex h-[22px] shrink-0 border-b border-[#8f8f8f]">
      <div className="mr-[310px] ml-auto flex items-center border-x border-[#8f8f8f] pl-[2px]">
        <span className="mr-px h-[18px] border-l-2 border-dotted border-[#999]" />
        <IconButton label="Normal to" className="w-6"><NormalIcon /></IconButton>
        <span className="h-4 border-l border-[#aaa]" />
        <div className="ml-[3px] flex">
          <IconButton label="Front" className="w-[18px]"><CubeIcon face="front" /></IconButton>
          <IconButton label="Back" className="w-[18px]"><CubeIcon face="back" /></IconButton>
          <IconButton label="Left" className="w-[18px]"><CubeIcon face="left" /></IconButton>
          <IconButton label="Right" className="w-[19px]"><CubeIcon face="right" fill="#a5cadb" /></IconButton>
          <IconButton label="Top" className="w-[18px]"><CubeIcon face="top" /></IconButton>
          <IconButton label="Bottom" className="w-[18px]"><CubeIcon face="bottom" /></IconButton>
          <IconButton label="Isometric" className="w-[18px]"><IsoIcon /></IconButton>
          <IconButton label="Trimetric" className="w-[18px]"><DiIcon /></IconButton>
          <IconButton label="Dimetric" className="w-[19px]"><TriIcon /></IconButton>
        </div>
        <span className="ml-[2px] h-4 border-l border-[#aaa]" />
        <IconButton label="View selector" className="w-[25px]"><TorchIcon /></IconButton>
      </div>
    </div>
  );
}

function BigTool({ icon, lines, drop, raised, className }: { icon: React.ReactNode; lines: string[]; drop?: boolean; raised?: boolean; className: string }) {
  return (
    <button type="button" className={`flex shrink-0 flex-col items-center text-[7px] leading-[9px] whitespace-nowrap ${raised ? "pt-[3px]" : "pt-2"} ${className}`}>
      {icon}
      {lines.map((l) => (
        <span key={l}>{l}</span>
      ))}
      {drop && <span className="mt-auto flex pb-[6px]"><Caret /></span>}
    </button>
  );
}
function SmallTools({ items, className }: { items: [React.ReactNode, string][]; className: string }) {
  return (
    <div className={`grid shrink-0 grid-rows-3 ${className}`}>
      {items.map(([icon, name]) => (
        <button key={name} type="button" className="flex items-center gap-[3px] text-[7px] whitespace-nowrap">
          {icon}
          <span>{name}</span>
        </button>
      ))}
    </div>
  );
}

function Ribbon() {
  return (
    <div className="flex h-[55px] shrink-0 items-stretch border-b border-[#8f8f8f] text-[#222]">
      <section className="flex w-[178px] border-r border-[#cfcfcf]">
        <BigTool className="w-10" icon={<ExtrudeIcon />} lines={["Extruded", "Boss/Base"]} />
        <BigTool className="w-[42px]" icon={<RevolveIcon />} lines={["Revolved", "Boss/Base"]} />
        <SmallTools className="pl-px" items={[[<SweepIcon s={14} />, "Swept Boss/Base"], [<LoftIcon />, "Lofted Boss/Base"], [<BoundaryIcon />, "Boundary Boss/Base"]]} />
      </section>
      <section className="flex w-[181px] border-r border-[#cfcfcf] pl-px">
        <BigTool className="w-[35px]" icon={<BlockIcon kind="cut" />} lines={["Extruded", "Cut"]} />
        <BigTool className="w-[35px]" raised drop icon={<HoleIcon />} lines={["Hole", "Wizard"]} />
        <BigTool className="w-[35px]" icon={<BlockIcon kind="revcut" />} lines={["Revolved", "Cut"]} />
        <SmallTools className="pl-[2px]" items={[[<BlockIcon kind="sweepcut" />, "Swept Cut"], [<BlockIcon kind="loftcut" />, "Lofted Cut"], [<BoundaryIcon green />, "Boundary Cut"]]} />
      </section>
      <section className="flex w-[157px] border-r border-[#cfcfcf]">
        <BigTool className="w-[26px]" raised drop icon={<BlockIcon kind="fillet" />} lines={["Fillet"]} />
        <BigTool className="w-[28px]" raised drop icon={<PatternIcon />} lines={["Linear", "Pattern"]} />
        <SmallTools className="w-[44px] pl-[4px]" items={[[<RibIcon />, "Rib"], [<DraftIcon />, "Draft"], [<BlockIcon kind="shell" />, "Shell"]]} />
        <SmallTools className="pl-[3px]" items={[[<BlockIcon kind="wrap" />, "Wrap"], [<IntersectIcon />, "Intersect"], [<MirrorIcon />, "Mirror"]]} />
      </section>
      <section className="flex w-[73px] border-r border-[#cfcfcf]">
        <BigTool className="w-[41px]" raised drop icon={<RefGeoIcon />} lines={["Reference", "Geometry"]} />
        <BigTool className="w-[30px]" raised drop icon={<CurvesIcon />} lines={["Curves"]} />
      </section>
      <BigTool className="w-[42px]" icon={<InstantIcon />} lines={["Instant3D"]} />
    </div>
  );
}

const ribbonTabs: [string, string][] = [
  ["Sketch", "w-[38px]"],
  ["Surfaces", "w-[41px]"],
  ["Evaluate", "w-[41px]"],
  ["DimXpert", "w-[44px]"],
  ["SOLIDWORKS Add-Ins", "w-[90px]"],
  ["SOLIDWORKS MBD", "w-[79px]"],
  ["SOLIDWORKS Inspection", "w-[99px]"],
];

function TabRow() {
  return (
    <div className="relative z-10 flex h-[15px] shrink-0 items-start bg-white">
      <div role="tablist" className="flex h-full shrink-0 text-[8px] whitespace-nowrap text-[#222]">
        <button type="button" role="tab" aria-selected="true" className="w-[39px] border-r border-[#8f8f8f] bg-[#f7f7f7] pr-1 font-medium">Features</button>
        {ribbonTabs.map(([name, w]) => (
          <button key={name} type="button" role="tab" aria-selected="false" className={`border-r border-b border-[#8f8f8f] bg-[#d4d4d4] ${w}`}>{name}</button>
        ))}
      </div>
      <div className="ml-[135px] flex h-[21px] shrink-0">
        <IconButton label="Zoom to fit" className="w-[18px]"><ZoomFitIcon /></IconButton>
        <IconButton label="Zoom to area" className="w-[17px]"><ZoomAreaIcon /></IconButton>
        <IconButton label="Previous view" className="w-[18px]"><PrevViewIcon /></IconButton>
        <IconButton label="Section view" className="w-[17px]"><SectionIcon /></IconButton>
        <IconButton label="Annotation views" className="w-[18px]"><AnnoViewIcon /></IconButton>
        <IconButton label="View orientation" className="w-[18px]"><CubeIcon face="front" color="#66757d" fill="#8ab8cd" /></IconButton>
        <DropButton label="Orientation options" color="#888" className="w-[10px]" />
        <IconButton label="Display style" className="w-4"><StyleIcon /></IconButton>
        <DropButton label="Style options" color="#888" className="w-[10px]" />
        <IconButton label="Hide or show items" className="w-4"><EyeIcon /></IconButton>
        <DropButton label="Hide options" color="#888" className="w-[10px]" />
        <IconButton label="Edit appearance" className="w-[18px]"><BallIcon tool="pencil" /></IconButton>
        <IconButton label="Apply scene" className="w-[18px]"><BallIcon tool="scene" /></IconButton>
        <DropButton label="Scene options" color="#888" className="w-[10px]" />
        <IconButton label="View settings" className="w-[17px]"><MonitorIcon /></IconButton>
        <DropButton label="Settings options" color="#888" className="w-[10px]" />
      </div>
      <div className="ml-auto flex h-[21px] shrink-0">
        <IconButton label="Collapse left" className="w-[18px]"><WinIcon d="M2 2h12v12H2zM9 5v6L6 8z" /></IconButton>
        <IconButton label="Collapse right" className="w-[17px]"><WinIcon d="M2 2h12v12H2zM8 5v6l3-3z" /></IconButton>
        <IconButton label="Minimize document" className="w-[18px]"><WinIcon d="M3 12h10M3 11h10" /></IconButton>
        <IconButton label="Restore document" className="w-[17px]"><WinIcon d="M1 6h9v7H1zM5 6V3h10v7h-5" /></IconButton>
        <IconButton label="Close document" className="w-[19px]"><WinIcon d="m3 3 10 10M13 3 3 13" /></IconButton>
      </div>
    </div>
  );
}

function SideStrip() {
  return (
    <div className="flex w-[18px] shrink-0 flex-col border-r border-[#b5b5b5]">
      <span className="mt-[2px] mb-[7px] border-t border-dotted border-[#777]" />
      <div className="grid h-[123px] auto-rows-fr border-b border-[#8f8f8f]">
        {["Front", "Back", "Left", "Right", "Top", "Bottom", "Isometric"].map((n) => (
          <IconButton key={n} label={`${n} sketch view`} className="w-[14px]"><CubeIcon color="#c4c4c4" s={13} /></IconButton>
        ))}
      </div>
      <div className="grid h-[59px] auto-rows-fr border-b border-[#8f8f8f] py-1">
        <IconButton label="Sketch" className="w-[14px]">
          <Ico s={13}>
            <path d="M2 1v10c0 2 1 3 3 3h9" fill="none" stroke="#2f6f94" strokeWidth="1.600" />
            <path d="M6 4v9l2.500-2 1.500 3 1.500-1-1.500-3h3z" fill="#fff" stroke="#333" />
            <circle cx="2.500" cy="2.500" r="2" fill="#e0903a" />
          </Ico>
        </IconButton>
        <IconButton label="Repair" className="w-[14px]">
          <Ico s={13}><path d="M1 2h6v5M2 14l7-7c0-4 3-5 5-4l-2 2 1 2 2-1c1 3-2 4-5 3l-5 6zM9 13h5" fill="none" stroke="#c0c0c0" strokeWidth="1.200" /></Ico>
        </IconButton>
        <IconButton label="Display pane" className="w-[14px]">
          <Ico s={13}><path d="M1.500 2.500h13v8h-13z" fill="#fff" stroke="#2a6587" strokeWidth="1.700" /><path d="M4 11v4M2 13h4M8 13.500h5" stroke="#222" strokeWidth="1.500" /></Ico>
        </IconButton>
      </div>
      <div className="grid h-[43px] auto-rows-fr border-b border-[#8f8f8f] py-1">
        {["Move", "Copy"].map((n) => (
          <IconButton key={n} label={n} className="w-[14px]">
            <Ico s={14}>
              <path d="m1 3 3-2h9v9l-2 2H1z" fill={n === "Move" ? G : "#ecd58a"} stroke="#7a6a20" />
              <path d="M3 1.500v10" stroke="#d9b43a" strokeWidth="2" />
              <path d="M7.500 7.500h7v7h-7z" fill="#e4f0f6" stroke="#2a6587" strokeWidth="1.300" />
              <path d="M10 10h2.500v2.500H10z" fill="#2a6587" />
            </Ico>
          </IconButton>
        ))}
      </div>
    </div>
  );
}

const tree: { name: string; icon: React.ReactNode; open?: boolean }[] = [
  { name: "History", icon: <FolderTag kind="history" />, open: true },
  { name: "Sensors", icon: <FolderTag kind="sensor" /> },
  { name: "Annotations", icon: <FolderTag kind="note" />, open: true },
  { name: "Material <not specified>", icon: <MaterialIcon /> },
  { name: "Front Plane", icon: <RefPlaneIcon /> },
  { name: "Top Plane", icon: <RefPlaneIcon /> },
  { name: "Right Plane", icon: <RefPlaneIcon /> },
  { name: "Origin", icon: <OriginIcon /> },
  { name: "Boss-Extrude1", icon: <ExtrudeIcon s={13} />, open: true },
  { name: "LPattern1", icon: <PatternIcon s={13} /> },
  { name: "Plane1", icon: <PlaneIcon /> },
  { name: "Sketch4", icon: <SketchIcon /> },
  { name: "Plane2", icon: <PlaneIcon /> },
  { name: "Sweep1", icon: <SweepIcon />, open: true },
  { name: "Plane3", icon: <PlaneIcon /> },
  { name: "Plane4", icon: <PlaneIcon /> },
  { name: "Sweep3", icon: <SweepIcon />, open: true },
  { name: "Sweep4", icon: <SweepIcon />, open: true },
  { name: "LPattern3", icon: <PatternIcon s={13} /> },
  { name: "DeleteFace1", icon: <BlockIcon kind="delete" s={13} /> },
  { name: "Boss-Extrude2", icon: <ExtrudeIcon s={13} />, open: true },
  { name: "Shell1", icon: <BlockIcon kind="shell" s={13} /> },
];

function FeaturePanel() {
  const off = "w-[27px] border-r border-b border-[#8f8f8f] bg-[#cdcdcd]";
  return (
    <aside className="relative flex w-[155px] shrink-0 flex-col border-t border-r border-[#8f8f8f] text-[#222]">
      <div className="flex h-[15px] shrink-0 items-center justify-center border-b border-[#a5a5a5]">
        <span className="size-1 rounded-full border border-[#777]" />
      </div>
      <div role="tablist" className="flex h-[18px] shrink-0">
        <IconButton label="Feature tree" className="w-[27px] border-r border-[#8f8f8f]"><PartIcon /></IconButton>
        <IconButton label="Properties" className={off}><ListIcon /></IconButton>
        <IconButton label="Configurations" className={off}><TreeCfgIcon /></IconButton>
        <IconButton label="Dimensions" className={off}><TargetIcon /></IconButton>
        <IconButton label="Display" className="w-[21px] border-b border-[#8f8f8f] bg-[#cdcdcd] pl-1"><BallIcon s={13} /></IconButton>
        <div className="flex flex-1 border-t-4 border-[#cdcdcd]">
          <IconButton label="Scroll tabs left" className="flex-1 bg-white"><svg width="3" height="4" viewBox="0 0 3 4"><path d="M3 0v4L0 2z" fill="#111" /></svg></IconButton>
          <IconButton label="Scroll tabs right" className="flex-1 border-l border-[#bbb] bg-white"><svg width="3" height="4" viewBox="0 0 3 4"><path d="M0 0v4l3-2z" fill="#111" /></svg></IconButton>
        </div>
      </div>
      <div className="mr-[2px] ml-[3px] flex h-[17px] shrink-0 items-center border border-[#cfcfcf] bg-[#fafafa]">
        <FunnelIcon />
        <input aria-label="Filter features" className="h-full min-w-0 flex-1 bg-transparent text-[8px] outline-none" />
      </div>
      <ul className="grid h-[345px] shrink-0 auto-rows-fr border-b-2 border-[#2f80b6] text-[8px] leading-none whitespace-nowrap">
        <li className="flex items-center pl-[2px]">
          <PartIcon s={13} />
          <span>Exhausr Manifold (Default&lt;&lt;Default&gt;</span>
        </li>
        {tree.map(({ name, icon, open }) => (
          <li key={name} className="flex items-center pl-[5px]">
            <span className="flex w-3">
              {open && (
                <button type="button" aria-label={`Expand ${name}`}>
                  <svg width="4" height="6" viewBox="0 0 4 6"><path d="M.5 0v6l3-3z" fill="#555" /></svg>
                </button>
              )}
            </span>
            {icon}
            <span className="ml-[3px]">{name}</span>
          </li>
        ))}
      </ul>
      <div className="mt-auto mb-1 flex h-[11px] shrink-0 items-stretch bg-[#f0f0f0]">
        <IconButton label="Scroll left" className="w-3"><svg width="4" height="6" viewBox="0 0 4 6"><path d="M3.500.5 1 3l2.500 2.500" fill="none" stroke="#333" /></svg></IconButton>
        <span className="w-[91px] bg-[#cdcdcd]" />
        <IconButton label="Scroll right" className="ml-auto w-3"><svg width="4" height="6" viewBox="0 0 4 6"><path d="M.5.5 3 3 .5 5.500" fill="none" stroke="#333" /></svg></IconButton>
      </div>
      <button type="button" aria-label="Collapse panel" className="absolute top-[268px] left-full flex h-[27px] w-[6px] items-center justify-center border border-l-0 border-[#9a9a9a] bg-[#f7f7f7]">
        <span className="size-[3px] rounded-full border border-[#888]" />
      </button>
    </aside>
  );
}

function TaskPane() {
  const cell = "h-[16px] w-full overflow-hidden border-b border-l border-[#9a9a9a] bg-[#d2d2d2]";
  return (
    <div className="mt-[19px] flex w-[14px] shrink-0 flex-col">
      <IconButton label="Resources" className={`${cell} border-t`}><HomeIcon /></IconButton>
      <IconButton label="Design library" className={cell}>
        <Ico><path d="m2 4 3-2 3 1 3-1.500L14 3v9l-3 2.500-3-1L5 15l-3-2z" fill="#bbb" stroke="#333" /><path d="M5 5v9M8 4v9M11 4.500v9" stroke="#333" /></Ico>
      </IconButton>
      <IconButton label="File explorer" className={cell}><FolderIcon /></IconButton>
      <IconButton label="View palette" className={cell}>
        <Ico><path d="M1.500 2.500h13v11h-13z" fill="#f2cf57" stroke="#5c4a12" /><path d="M4 5h3v2H4zM10 5h2v3h-2zM4 10h4v2" fill="#fff" stroke="#5c4a12" /></Ico>
      </IconButton>
      <IconButton label="Appearances" className="h-[16px] w-full border-b border-l border-[#9a9a9a] bg-white"><BallIcon s={13} /></IconButton>
      <IconButton label="Custom properties" className={cell}><ListIcon /></IconButton>
      <IconButton label="Forum" className={cell}>
        <Ico><path d="M1 2.500h9v6H5l-2 2.500v-2.500H1z" fill="#3d7fa5" stroke="#1f5674" /><path d="M7 6.500h8v6h-1.500V15L11 12.500H7z" fill="#fff" stroke="#444" /></Ico>
      </IconButton>
    </div>
  );
}

function BottomTabs() {
  return (
    <div role="tablist" className="flex h-[6px] shrink-0 items-start overflow-hidden border-t border-[#8f8f8f] pl-[18px] text-[8px] leading-[8px] text-[#222]">
      {["First", "Previous", "Next", "Last"].map((n) => (
        <button key={n} type="button" aria-label={n} className="flex h-[10px] w-[11px] items-start justify-center border-r border-[#888] bg-[#a9a9a9] pt-[2px]">
          <svg width="4" height="5" viewBox="0 0 4 5"><path d={n === "First" || n === "Previous" ? "M4 0v5L0 2.500z" : "M0 0v5l4-2.500z"} fill="#7c7c7c" /></svg>
        </button>
      ))}
      <button type="button" role="tab" aria-selected="true" className="w-[40px] font-bold">Model</button>
      <button type="button" role="tab" aria-selected="false" className="w-[46px] border-x border-[#8f8f8f] bg-[#cdcdcd]">3D Views</button>
      <button type="button" role="tab" aria-selected="false" className="w-[73px] border-r border-[#8f8f8f] bg-[#cdcdcd] pr-2">Motion Study 1</button>
    </div>
  );
}

export default function App() {
  return (
    <div className="flex h-screen flex-col overflow-hidden bg-black py-[11px] font-['Noto_Sans',sans-serif]">
      <div className="flex min-h-0 flex-1 flex-col bg-[#f7f7f7]">
        <TitleBar />
        <ViewBar />
        <Ribbon />
        <TabRow />
        <div className="flex min-h-0 flex-1">
          <SideStrip />
          <FeaturePanel />
          <main className="flex min-w-0 flex-1 bg-white">
            <div className="min-w-0 flex-1"><Model /></div>
            <TaskPane />
          </main>
        </div>
        <BottomTabs />
      </div>
    </div>
  );
}
